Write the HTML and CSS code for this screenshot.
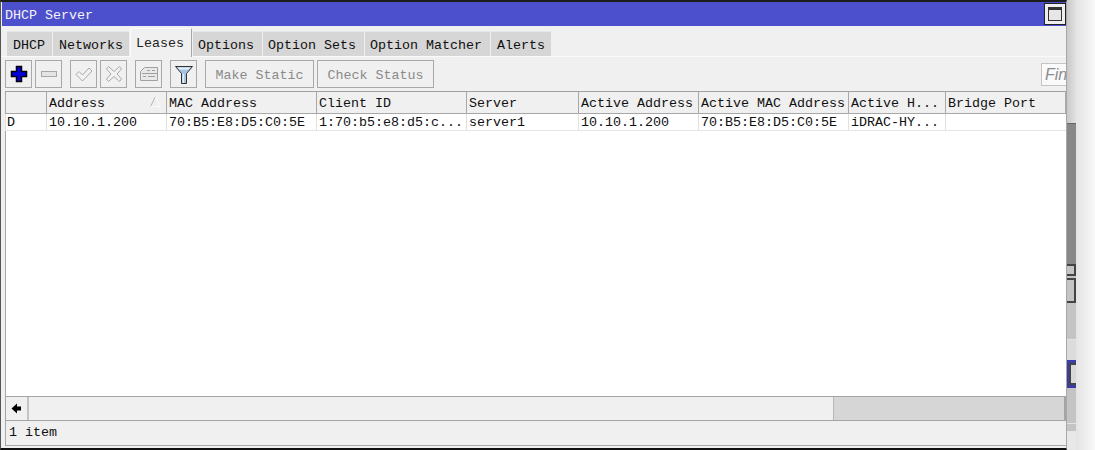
FILE: index.html
```html
<!DOCTYPE html>
<html lang="en">
<head>
<meta charset="utf-8">
<title>DHCP Server</title>
<link rel="stylesheet" href="styles.css">
</head>
<body>
<main class="window">
  <header class="titlebar">
    <span class="title">DHCP Server</span>
    <button class="maximize" aria-label="Maximize"><span class="maximize-glyph"></span></button>
  </header>
  <nav class="tabs">
    <span class="tab tab-first">DHCP</span>
    <span class="tab">Networks</span>
    <span class="tab tab-active">Leases</span>
    <span class="tab tab-tight">Options</span>
    <span class="tab tab-tight">Option Sets</span>
    <span class="tab tab-tight">Option Matcher</span>
    <span class="tab">Alerts</span>
  </nav>
  <div class="toolbar">
    <span class="tool">
      <svg width="18" height="18" viewBox="0 0 18 18"><path d="M6.500 1.500h5v5h5v5h-5v5h-5v-5h-5v-5h5z" fill="#0000e0" stroke="#000" stroke-width="1.500"/></svg>
    </span>
    <span class="tool tool-near">
      <svg width="18" height="18" viewBox="0 0 18 18"><rect x="1.500" y="6.500" width="15" height="5" fill="#e4e4e4" stroke="#a8a8a8"/></svg>
    </span>
    <span class="tool tool-far">
      <svg width="18" height="18" viewBox="0 0 18 18"><path d="M1 9.500l3-3 3.500 3.500L14 3l3 3-9.500 10z" fill="#f2f2f2" stroke="#a8a8a8"/></svg>
    </span>
    <span class="tool tool-near">
      <svg width="18" height="18" viewBox="0 0 18 18"><path d="M3.500 1.500L9 6.500l5.500-5 2 2.500L12 9l4.500 5-2 2.500L9 11.500l-5.500 5-2-2.500L6 9 1.500 4z" fill="#f2f2f2" stroke="#a8a8a8"/></svg>
    </span>
    <span class="tool tool-far">
      <svg width="20" height="18" viewBox="0 0 20 18"><path d="M1.500 6.500l4-4h13v13h-17z" fill="#e8e8e8" stroke="#a0a0a0"/><path d="M8 5.500h3m2 0h3M3 8.500h15M4 11.500h3m2 0h7" stroke="#a0a0a0" fill="none"/></svg>
    </span>
    <span class="tool tool-far">
      <svg width="18" height="19" viewBox="0 0 18 19"><path d="M0.500 1.500h17L11.500 8.500v10h-5v-10z" fill="#a8c4e4" stroke="#303030"/><path d="M2.500 2.500h13l-2 2h-9z" fill="#e8eef6"/><path d="M7.500 9h1.500v9H7.500z" fill="#e4edf6"/></svg>
    </span>
    <span class="text-tool text-tool-make">Make Static</span>
    <span class="text-tool text-tool-check">Check Status</span>
    <span class="find">Find</span>
  </div>
  <table class="grid">
    <colgroup>
      <col class="c0"><col class="c1"><col class="c2"><col class="c3"><col class="c4"><col class="c5"><col class="c6"><col class="c7"><col class="c8">
    </colgroup>
    <thead>
      <tr>
        <th></th>
        <th class="sorted">Address<svg class="sort" width="11" height="11" viewBox="0 0 11 11"><path d="M5.500 0.500L0.500 10.500" stroke="#b4b4b4" fill="none"/><path d="M5.500 0.500L10.500 10.500H0.500" stroke="#fafafa" fill="none"/></svg></th>
        <th>MAC Address</th>
        <th>Client ID</th>
        <th>Server</th>
        <th>Active Address</th>
        <th>Active MAC Address</th>
        <th>Active H...</th>
        <th>Bridge Port</th>
      </tr>
    </thead>
    <tbody>
      <tr>
        <td>D</td>
        <td>10.10.1.200</td>
        <td>70:B5:E8:D5:C0:5E</td>
        <td>1:70:b5:e8:d5:c...</td>
        <td>server1</td>
        <td>10.10.1.200</td>
        <td>70:B5:E8:D5:C0:5E</td>
        <td>iDRAC-HY...</td>
        <td></td>
      </tr>
    </tbody>
  </table>
  <div class="blank"></div>
  <div class="hscroll">
    <span class="arrow">
      <svg width="11" height="11" viewBox="0 0 11 11"><path d="M0.500 5.500L6 0.500v3h4v4H6v3z" fill="#000"/></svg>
    </span>
    <span class="thumb"></span>
    <span class="track"></span>
  </div>
  <footer class="status">1 item</footer>
</main>
<aside class="behind">
  <div class="sliver">
    <div class="s-light"></div>
    <div class="s-dark"></div>
    <div class="s-box s-box-a"></div>
    <div class="s-box s-box-b"></div>
    <div class="s-mid"></div>
    <div class="s-line"></div>
    <div class="s-pale"></div>
    <div class="s-blue"><span class="s-blue-inner"></span></div>
    <div class="s-mid2"></div>
    <div class="s-line"></div>
    <div class="s-mid3"></div>
    <div class="s-foot"></div>
  </div>
  <div class="shade"></div>
</aside>
</body>
</html>
```
FILE: styles.css
```css
* { box-sizing: border-box; }

html, body {
  margin: 0;
  height: 450px;
  overflow: hidden;
}

body {
  display: flex;
  width: 1095px;
  background: #f6f6f6;
  font-family: "Liberation Mono", "DejaVu Sans Mono", monospace;
  font-size: 13.333px;
  color: #101010;
}

.window {
  width: 1067px;
  height: 450px;
  display: flex;
  flex-direction: column;
  background: #f0f0f0;
  border-top: 2px solid #1c1c1c;
  border-bottom: 2px solid #101010;
  border-left: 1px solid #555;
  border-right: 1px solid #a8a8a8;
  padding-bottom: 2px;
}

.titlebar {
  height: 24px;
  flex: none;
  display: flex;
  align-items: flex-start;
  justify-content: space-between;
  background: #4d50cc;
  color: #f4f4f4;
  margin-left: 1px;
}

.title {
  padding: 4px 0 0 3px;
  line-height: 20px;
}

.maximize {
  width: 22px;
  height: 22px;
  margin: 1px 0 0;
  padding: 3px;
  background: #efefef;
  border: 1px solid #222;
  display: flex;
}

.maximize-glyph {
  flex: 1;
  background: #e8e6e6;
  border: 1px solid #333;
  border-top-width: 3px;
}

.tabs {
  height: 31px;
  flex: none;
  display: flex;
  align-items: flex-end;
  padding-left: 6px;
  gap: 1px;
  border-bottom: 1px solid #fafafa;
}

.tab {
  height: 25px;
  line-height: 27px;
  padding: 0 6px;
  background: #d6d6d6;
  border-top: 1px solid #e6e6e6;
}

.tab-first { width: 45px; }

.tab-tight { padding: 0 8px 0 5px; }

.tab-active {
  height: 29px;
  line-height: 29px;
  padding: 0 7px 0 5px;
  margin-bottom: -1px;
  background: #f0f0f0;
  border-top: 1px solid #fafafa;
  border-left: 1px solid #fafafa;
  border-right: 1px solid #a8a8a8;
  color: #222;
}

.toolbar {
  height: 34px;
  flex: none;
  display: flex;
  align-items: center;
  padding-left: 4px;
}

.tool {
  width: 27px;
  height: 28px;
  flex: none;
  display: flex;
  align-items: center;
  justify-content: center;
  border: 1px solid #a8a8a8;
  background: #f0f0f0;
}

.tool-near { margin-left: 3px; }
.tool-far { margin-left: 8px; }

.text-tool {
  height: 28px;
  flex: none;
  display: flex;
  align-items: center;
  justify-content: center;
  padding-top: 2px;
  border: 1px solid #a8a8a8;
  color: #8a8a8a;
}

.text-tool-make { width: 109px; margin-left: 8px; }
.text-tool-check { width: 117px; margin-left: 3px; }

.find {
  width: 25px;
  height: 23px;
  margin-left: auto;
  padding-left: 3px;
  overflow: hidden;
  background: #fafafa;
  border: 1px solid #c4c4c4;
  border-right: none;
  font: italic 16px/21px "Liberation Sans", sans-serif;
  color: #8c8c94;
  white-space: nowrap;
}

.grid {
  flex: none;
  width: 1060px;
  margin-left: 4px;
  border-collapse: collapse;
  table-layout: fixed;
  background: #fff;
}

.c0 { width: 41px; }
.c1 { width: 120px; }
.c2 { width: 150px; }
.c3 { width: 150px; }
.c4 { width: 112px; }
.c5 { width: 120px; }
.c6 { width: 150px; }
.c7 { width: 97px; }
.c8 { width: 120px; }

.grid th {
  height: 22px;
  padding: 1px 0 0 2px;
  font-weight: normal;
  text-align: left;
  background: #f0f0f0;
  white-space: nowrap;
  border-top: 1px solid #a0a0a0;
  border-bottom: 1px solid #a8a8a8;
  border-left: 1px solid #a8a8a8;
}

.grid th:last-child { border-right: 1px solid #a8a8a8; }

.sorted { position: relative; }

.sort {
  position: absolute;
  right: 5px;
  top: 4px;
}

.grid td {
  height: 17px;
  padding: 0 0 0 2px;
  white-space: nowrap;
  border-left: 1px solid #e0e0e0;
  border-bottom: 1px solid #e4e4e4;
}

.grid td:first-child { padding-left: 1px; }

.blank {
  flex: 1;
  margin-left: 4px;
  background: #fff;
  border-left: 1px solid #a8a8a8;
}

.hscroll {
  height: 25px;
  flex: none;
  margin-left: 4px;
  display: flex;
  border: 1px solid #a4a4a4;
  border-right: 2px solid #a4a4a4;
}

.arrow {
  width: 23px;
  flex: none;
  display: flex;
  align-items: center;
  justify-content: center;
  border-right: 2px solid #c4c4c4;
}

.thumb {
  width: 805px;
  flex: none;
  border-right: 1px solid #b8b8b8;
  background: #f0f0f0;
}

.track {
  flex: 1;
  background: #d6d6d6;
}

.status {
  height: 25px;
  flex: none;
  margin-left: 4px;
  padding: 1px 0 0 3px;
  line-height: 22px;
  border-left: 1px solid #a8a8a8;
  border-bottom: 1px solid #a8a8a8;
}

.behind {
  flex: 1;
  height: 450px;
  display: flex;
}

.sliver {
  width: 9px;
  flex: none;
  display: flex;
  flex-direction: column;
  background: #c4c4c4;
}

.s-light {
  height: 123px;
  background: linear-gradient(to right, #c8c8c8, #e2e2e2);
}
.s-dark { height: 141px; background: #888; border-top: 1px solid #666; }
.s-box { background: #c4c4c4; border: 2px solid #444; border-left: none; }
.s-box-a { height: 12px; }
.s-box-b { height: 25px; margin-top: 2px; }
.s-mid { height: 36px; }
.s-line { height: 1px; background: #e4e4e4; }
.s-pale { height: 20px; background: #dcdcdc; }
.s-blue {
  height: 28px;
  padding: 3px 0 3px 2px;
  display: flex;
  background: #3c3ca8;
}
.s-blue-inner {
  flex: 1;
  background: #d8d8d8;
  border: 2px solid #444;
  border-right: none;
}
.s-mid2 { height: 35px; }
.s-mid3 { height: 7px; }
.s-foot { flex: 1; background: #e8e8e8; }

.shade {
  flex: 1;
  background: linear-gradient(to right, #e4e4e4, #f8f8f8);
}
```
